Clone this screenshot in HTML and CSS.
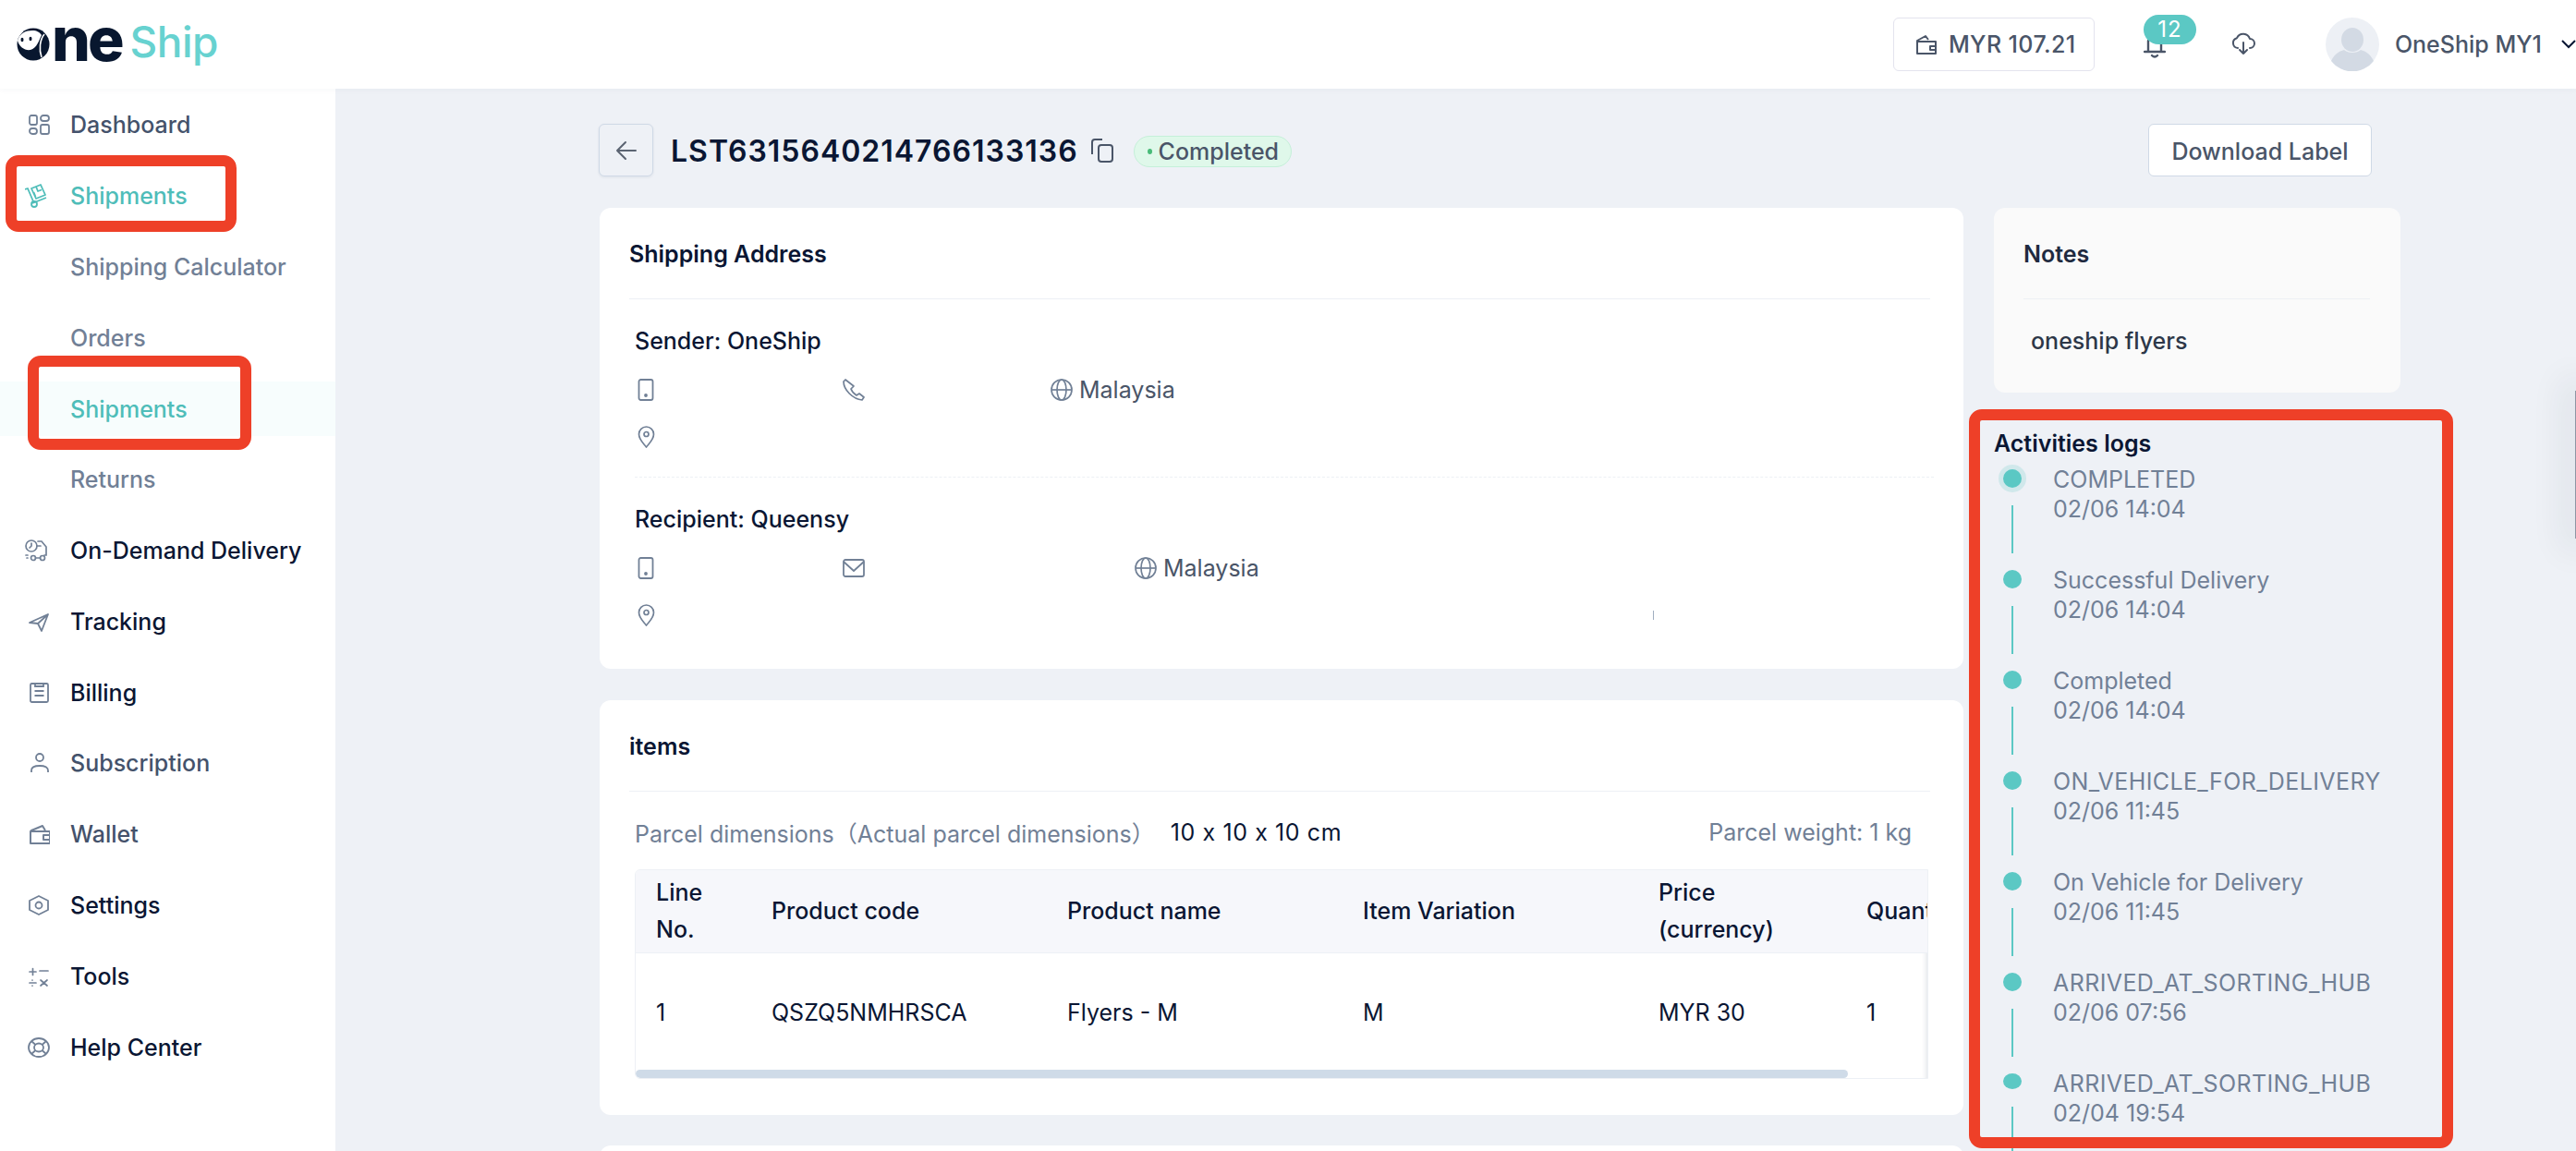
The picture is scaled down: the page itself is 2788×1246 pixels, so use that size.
FILE: index.html
```html
<!DOCTYPE html>
<html lang="en">
<head>
<meta charset="utf-8">
<title>OneShip</title>
<link rel="stylesheet" href="styles.css">
</head>
<body>
<header class="topbar">
  <div class="logo">
    <svg class="logo-mark" width="38" height="36" viewBox="0 0 38 36"><circle cx="18" cy="18" r="17.5" fill="#08172f"/><path d="M1 14C3 6 10 3 17 3c5 0 8 2 10 5-3 6-5 14-12 16C9 25 3 21 1 14z" fill="#fff"/><ellipse cx="6" cy="13" rx="1.500" ry="2.200" fill="#08172f"/><ellipse cx="15" cy="12" rx="1.500" ry="2.200" fill="#08172f"/><path d="M30 7c-5 6-6 17-3 25" fill="none" stroke="#fff" stroke-width="1.600"/></svg>
    <span class="logo-ne">ne</span><span class="logo-ship">Ship</span>
  </div>
  <div class="top-actions">
    <div class="balance">
      <svg width="24" height="24" viewBox="0 0 24 24" fill="none" stroke="#4a5568" stroke-width="2" stroke-linejoin="round"><path d="M2 9h20v13H2zM2 9l0-1 9-5 3 4M16 14h6v4h-6z"/></svg>
      <span>MYR 107.21</span>
    </div>
    <div class="bell">
      <svg width="24" height="24" viewBox="0 0 24 24" fill="none" stroke="#4a5568" stroke-width="2.400" stroke-linecap="round"><path d="M5 15V4M19 15V4M1 16h22M9 20q3 3 6 0"/></svg>
      <span class="bell-badge">12</span>
    </div>
    <svg class="cloud" width="26" height="26" viewBox="0 0 26 26" fill="none" stroke="#4a5568" stroke-width="2" stroke-linecap="round" stroke-linejoin="round"><path d="M7 18a5.500 5.500 0 0 1-1-10.800A7.500 7.500 0 0 1 20 8a5 5 0 0 1 0 10M13 12v12M9 20l4 4 4-4"/></svg>
    <svg class="avatar" width="58" height="58" viewBox="0 0 58 58"><circle cx="29" cy="29" r="29" fill="#edf0f5"/><ellipse cx="29" cy="24" rx="12" ry="13" fill="#d3dae4"/><path d="M6 47c4-9 11-11 14-12 4 4 14 4 18 0 3 1 10 3 14 12a29 29 0 0 1-46 0z" fill="#d3dae4"/></svg>
    <span class="user-name">OneShip MY1</span>
    <svg class="chevron" width="16" height="10" viewBox="0 0 16 10" fill="none" stroke="#0a1633" stroke-width="2"><path d="M1 1l7 7 7-7"/></svg>
  </div>
</header>

<div class="layout">
  <nav class="sidebar">
    <a class="nav-item tone-mid">
      <svg width="24" height="24" viewBox="0 0 24 24" fill="none" stroke="#718096" stroke-width="1.800"><rect x="2" y="2" width="8" height="10" rx="2"/><rect x="14" y="2" width="9" height="6" rx="3"/><rect x="2" y="16" width="8" height="6" rx="3"/><rect x="14" y="12" width="9" height="10" rx="2"/></svg>
      Dashboard
    </a>
    <a class="nav-item tone-active">
      <svg class="icon-shift" width="24" height="26" viewBox="0 0 24 26" fill="none" stroke="#4fbdb9" stroke-width="1.800" stroke-linejoin="round"><path d="M0 6l3-1 6 14M8 21l15-6"/><circle cx="10" cy="22" r="3"/><path d="M7 5l10-4 5 11-10 4zM12 3l2 5 4-1.500M9.500 9l2 5"/></svg>
      Shipments
    </a>
    <a class="nav-item tone-sub">Shipping Calculator</a>
    <a class="nav-item tone-sub">Orders</a>
    <a class="nav-item tone-active is-current">Shipments</a>
    <a class="nav-item tone-sub">Returns</a>
    <a class="nav-item tone-dark">
      <svg class="icon-wide" width="26" height="24" viewBox="0 0 26 24" fill="none" stroke="#718096" stroke-width="1.700" stroke-linecap="round"><circle cx="7" cy="7" r="6"/><path d="M7 4v3l-2 2M14 2h4l5 6v9h-2M13 7h4M1 17h2M2 20h1"/><circle cx="9" cy="20" r="2.500"/><circle cx="19" cy="20" r="2.500"/><path d="M11.500 20h5"/></svg>
      On-Demand Delivery
    </a>
    <a class="nav-item tone-dark">
      <svg width="24" height="24" viewBox="0 0 24 24" fill="none" stroke="#718096" stroke-width="1.800" stroke-linejoin="round"><path d="M2 13L22 4l-7 18-4-8zM11 14l11-10"/></svg>
      Tracking
    </a>
    <a class="nav-item tone-dark">
      <svg width="24" height="24" viewBox="0 0 24 24" fill="none" stroke="#718096" stroke-width="1.800"><rect x="3" y="2" width="19" height="20" rx="1.500"/><path d="M8 2v3h9V2M7.500 10h10M7.500 15h10"/></svg>
      Billing
    </a>
    <a class="nav-item tone-mid">
      <svg width="24" height="24" viewBox="0 0 24 24" fill="none" stroke="#718096" stroke-width="1.800"><circle cx="13" cy="6" r="4"/><path d="M4 22v-2c0-3 3-5 9-5s9 2 9 5v2"/></svg>
      Subscription
    </a>
    <a class="nav-item tone-mid">
      <svg width="24" height="24" viewBox="0 0 24 24" fill="none" stroke="#718096" stroke-width="2" stroke-linejoin="round"><path d="M3 9h21v13H3zM3 9l1-1 12-5 3 5M17 13h7v5h-7z"/></svg>
      Wallet
    </a>
    <a class="nav-item tone-dark">
      <svg width="24" height="24" viewBox="0 0 24 24" fill="none" stroke="#718096" stroke-width="1.800" stroke-linejoin="round"><path d="M12 2l10 5v10l-10 5-10-5V7z"/><circle cx="12" cy="12" r="3.500"/></svg>
      Settings
    </a>
    <a class="nav-item tone-dark">
      <svg width="24" height="24" viewBox="0 0 24 24" fill="none" stroke="#718096" stroke-width="1.700" stroke-linecap="round"><path d="M2 7h7M5.500 3.500v7M2 19h7M5 16v.1M5 22v.1M13 6h9M14 16l7 6M21 16l-7 6"/></svg>
      Tools
    </a>
    <a class="nav-item tone-dark">
      <svg width="24" height="24" viewBox="0 0 24 24" fill="none" stroke="#718096" stroke-width="1.800"><ellipse cx="12" cy="12" rx="11" ry="10"/><ellipse cx="12" cy="12" rx="5" ry="4.500"/><path d="M4 5l4.500 4M20 5l-4.500 4M4 19l4.500-4M20 19l-4.500-4"/></svg>
      Help Center
    </a>
  </nav>

  <main class="content">
    <div class="title-row">
      <div class="title-left">
        <button class="back-btn" type="button">
          <svg width="24" height="24" viewBox="0 0 24 24" fill="none" stroke="#5b6472" stroke-width="2" stroke-linecap="round" stroke-linejoin="round"><path d="M22 12H2M11 3l-9 9 9 9"/></svg>
        </button>
        <h1 class="shipment-id">LST6315640214766133136</h1>
        <svg class="copy-icon" width="26" height="26" viewBox="0 0 26 26" fill="none" stroke="#4a5568" stroke-width="2"><path d="M2 17V4a3 3 0 0 1 3-3h8"/><rect x="9" y="7" width="15" height="18" rx="3"/></svg>
        <span class="status-badge"><i class="status-dot"></i>Completed</span>
      </div>
      <button class="download-btn" type="button">Download Label</button>
    </div>

    <div class="columns">
      <div class="col-main">
        <section class="card card-address">
          <h2 class="card-title">Shipping Address</h2>
          <div class="party">
            <div class="party-name">Sender: OneShip</div>
            <div class="party-row">
              <span class="field field-a"><svg width="24" height="24" viewBox="0 0 24 24" fill="none" stroke="#718096" stroke-width="1.800"><rect x="4.500" y="1" width="15" height="22" rx="2"/><circle cx="12" cy="18" r="1" fill="#718096"/></svg></span>
              <span class="field field-b"><svg width="24" height="24" viewBox="0 0 24 24" fill="none" stroke="#718096" stroke-width="1.700" stroke-linejoin="round"><path d="M3 1L1 3c0 9 10 19 20 20l2-3-5-4-3 2c-3-2-5-4-6-7l3-3z"/></svg></span>
              <span class="field"><svg width="24" height="24" viewBox="0 0 24 24" fill="none" stroke="#718096" stroke-width="1.700"><circle cx="12" cy="12" r="11"/><ellipse cx="12" cy="12" rx="5" ry="11"/><path d="M1 12h22"/></svg>Malaysia</span>
            </div>
            <div class="party-row">
              <span class="field"><svg width="24" height="24" viewBox="0 0 24 24" fill="none" stroke="#718096" stroke-width="1.700" stroke-linejoin="round"><path d="M12.500 23c-3-4-8-8-8-14a8 8 0 0 1 16 0c0 6-5 10-8 14z"/><circle cx="12.500" cy="9" r="2.500"/></svg></span>
            </div>
          </div>
          <div class="party party-next">
            <div class="party-name">Recipient: Queensy</div>
            <div class="party-row">
              <span class="field field-a"><svg width="24" height="24" viewBox="0 0 24 24" fill="none" stroke="#718096" stroke-width="1.800"><rect x="4.500" y="1" width="15" height="22" rx="2"/><circle cx="12" cy="18" r="1" fill="#718096"/></svg></span>
              <span class="field field-c"><svg width="24" height="24" viewBox="0 0 24 24" fill="none" stroke="#718096" stroke-width="1.800" stroke-linejoin="round"><rect x="1" y="3" width="22" height="18" rx="2"/><path d="M1 5l11 10L23 5"/></svg></span>
              <span class="field"><svg width="24" height="24" viewBox="0 0 24 24" fill="none" stroke="#718096" stroke-width="1.700"><circle cx="12" cy="12" r="11"/><ellipse cx="12" cy="12" rx="5" ry="11"/><path d="M1 12h22"/></svg>Malaysia</span>
            </div>
            <div class="party-row">
              <span class="field"><svg width="24" height="24" viewBox="0 0 24 24" fill="none" stroke="#718096" stroke-width="1.700" stroke-linejoin="round"><path d="M12.500 23c-3-4-8-8-8-14a8 8 0 0 1 16 0c0 6-5 10-8 14z"/><circle cx="12.500" cy="9" r="2.500"/></svg></span>
              <i class="sliver"></i>
            </div>
          </div>
        </section>

        <section class="card card-items">
          <h2 class="card-title">items</h2>
          <div class="parcel-row">
            <span class="parcel-label">Parcel dimensions（Actual parcel dimensions）</span>
            <span class="parcel-value">10 x 10 x 10 cm</span>
            <span class="parcel-weight">Parcel weight: 1 kg</span>
          </div>
          <div class="table-wrap">
            <table class="items-table">
              <thead>
                <tr>
                  <th class="c-line">Line No.</th>
                  <th class="c-wide">Product code</th>
                  <th class="c-wide">Product name</th>
                  <th class="c-wide">Item Variation</th>
                  <th class="c-price">Price (currency)</th>
                  <th class="c-qty">Quantity</th>
                </tr>
              </thead>
              <tbody>
                <tr>
                  <td>1</td>
                  <td>QSZQ5NMHRSCA</td>
                  <td>Flyers - M</td>
                  <td>M</td>
                  <td>MYR 30</td>
                  <td>1</td>
                </tr>
              </tbody>
            </table>
            <div class="table-scroll"></div>
          </div>
        </section>

        <section class="card card-more"></section>
      </div>

      <aside class="col-side">
        <section class="card card-notes">
          <h2 class="card-title notes-title">Notes</h2>
          <p class="notes-text">oneship flyers</p>
        </section>
        <h2 class="logs-title">Activities logs</h2>
        <ol class="timeline">
          <li class="log log-first"><div class="log-rail"><i class="log-dot"></i><i class="log-line"></i></div><div class="log-text">COMPLETED<br>02/06 14:04</div></li>
          <li class="log"><div class="log-rail"><i class="log-dot"></i><i class="log-line"></i></div><div class="log-text">Successful Delivery<br>02/06 14:04</div></li>
          <li class="log"><div class="log-rail"><i class="log-dot"></i><i class="log-line"></i></div><div class="log-text">Completed<br>02/06 14:04</div></li>
          <li class="log"><div class="log-rail"><i class="log-dot"></i><i class="log-line"></i></div><div class="log-text"><span class="log-code">ON_VEHICLE_FOR_DELIVERY</span><br>02/06 11:45</div></li>
          <li class="log"><div class="log-rail"><i class="log-dot"></i><i class="log-line"></i></div><div class="log-text">On Vehicle for Delivery<br>02/06 11:45</div></li>
          <li class="log"><div class="log-rail"><i class="log-dot"></i><i class="log-line"></i></div><div class="log-text"><span class="log-code">ARRIVED_AT_SORTING_HUB</span><br>02/06 07:56</div></li>
          <li class="log"><div class="log-rail"><i class="log-dot"></i><i class="log-line"></i></div><div class="log-text"><span class="log-code">ARRIVED_AT_SORTING_HUB</span><br>02/04 19:54</div></li>
        </ol>
      </aside>
    </div>
  </main>
</div>

<div class="drawer-handle"></div>
<div class="mark mark-nav"></div>
<div class="mark mark-sub"></div>
<div class="mark mark-logs"></div>
</body>
</html>
```
FILE: styles.css
```css
* { box-sizing: border-box; }
html, body { margin: 0; height: 1246px; overflow: hidden; }
body {
  position: relative;
  background: #eef1f6;
  font-family: Inter, "Noto Sans CJK SC", "Liberation Sans", sans-serif;
  font-size: 25px;
  color: #0a1633;
}
h1, h2, p, ol { margin: 0; padding: 0; }
svg { flex: none; display: block; }

/* top bar */
.topbar {
  height: 96px;
  background: #fff;
  display: flex;
  align-items: center;
  justify-content: space-between;
  padding-left: 18px;
  box-shadow: 0 2px 6px rgba(30, 50, 80, .03);
  position: relative;
}
.logo { display: flex; align-items: center; height: 96px; }
.logo-ne {
  font-size: 66px;
  font-weight: 800;
  letter-spacing: -3px;
  line-height: 96px;
  margin: -13px 0 0 0;
  color: #08172f;
}
.logo-ship {
  font-size: 46px;
  font-weight: 500;
  line-height: 96px;
  margin: -6px 0 0 9px;
  letter-spacing: -.5px;
  color: #67d2d0;
}
.top-actions { display: flex; align-items: center; }
.balance {
  width: 218px;
  height: 58px;
  border: 1px solid #e3e3ee;
  border-radius: 6px;
  display: flex;
  align-items: center;
  gap: 12px;
  padding-left: 23px;
  font-weight: 500;
  color: #4a5568;
  letter-spacing: .4px;
}
.bell { position: relative; width: 24px; height: 24px; margin: 8px 0 0 53px; }
.bell-badge {
  position: absolute;
  left: 0;
  top: -24px;
  width: 57px;
  height: 32px;
  border-radius: 16px;
  background: #5bc8c4;
  color: #fff;
  font-size: 24px;
  line-height: 32px;
  letter-spacing: 1px;
  text-align: center;
}
.cloud { margin: -2px 0 0 71px; }
.avatar { margin-left: 76px; }
.user-name { margin-left: 17px; font-weight: 500; color: #4a5568; white-space: nowrap; }
.chevron { margin-left: 21px; margin-right: 0; }

/* sidebar */
.layout { display: flex; height: 1150px; overflow: hidden; }
.sidebar {
  width: 363px;
  flex: none;
  background: #fff;
  padding-top: 10px;
  display: flex;
  flex-direction: column;
  gap: 17.900px;
}
.nav-item {
  height: 58.900px;
  flex: none;
  display: flex;
  align-items: center;
  padding-left: 76px;
  font-weight: 500;
  white-space: nowrap;
}
.nav-item svg { margin-left: -46px; margin-right: 22px; }
.nav-item .icon-shift { margin-left: -49px; margin-right: 25px; }
.nav-item .icon-wide { margin-left: -49px; margin-right: 23px; }
.tone-mid { color: #44526b; }
.tone-active { color: #4fbdb9; }
.tone-sub { color: #718096; }
.tone-dark { color: #0a1633; }
.is-current { background: #f7fdfd; }

/* content */
.content { flex: 1; min-width: 0; padding: 38px 0 0 285px; }
.title-row {
  width: 1919px;
  height: 57px;
  margin-bottom: 34px;
  display: flex;
  align-items: center;
  justify-content: space-between;
}
.title-left { display: flex; align-items: center; }
.back-btn {
  width: 59px;
  height: 57px;
  padding: 0;
  background: #eef1f6;
  border: 1px solid #cfd9e6;
  border-radius: 6px;
  box-shadow: 0 1px 3px rgba(30, 50, 80, .08);
  display: flex;
  align-items: center;
  justify-content: center;
}
.shipment-id {
  margin: 2px 0 0 19px;
  font-size: 32px;
  font-weight: 600;
  line-height: 57px;
  letter-spacing: 1px;
}
.copy-icon { margin-left: 13px; }
.status-badge {
  margin: 2px 0 0 21px;
  height: 34px;
  width: 171px;
  border: 1px solid #c5f0d9;
  border-radius: 17px;
  background: #dff8ea;
  display: flex;
  align-items: center;
  color: #4a5568;
  font-weight: 500;
}
.status-dot {
  width: 5px;
  height: 6px;
  border-radius: 50%;
  background: #48bb78;
  margin: 0 7px 0 14px;
}
.download-btn {
  width: 242px;
  height: 57px;
  padding: 2px 0 0;
  background: #fff;
  border: 1px solid #cfd9e6;
  border-radius: 6px;
  font: 500 25px Inter, sans-serif;
  color: #4a5568;
}

.columns { display: flex; gap: 33px; align-items: flex-start; margin-left: 1px; }
.col-main { width: 1476px; flex: none; }
.col-side { width: 440px; flex: none; }
.card { background: #fff; border-radius: 12px; }
.card-title {
  height: 99px;
  margin: 0 36px 0 32px;
  border-bottom: 1px solid #edf0f5;
  font-size: 25px;
  font-weight: 600;
  line-height: 100px;
}
.card-address { height: 499px; margin-bottom: 34px; }
.party { margin: 0 32px 0 38px; padding-top: 25px; height: 192px; }
.party-next { border-top: 1px dashed #edf0f5; }
.party-name { height: 40px; line-height: 40px; font-weight: 500; }
.party-row { height: 40px; margin-top: 13px; display: flex; align-items: center; color: #4a5568; }
.party-row + .party-row { margin-top: 11px; }
.field { display: flex; align-items: center; gap: 7px; }
.field-a, .field-b { width: 225px; }
.field-c { width: 316px; }
.sliver { width: 1px; height: 10px; background: #a0aec0; margin-left: 1078px; }

.card-items { height: 449px; margin-bottom: 33px; }
.parcel-row {
  height: 40px;
  margin: 24px 56px 20px 38px;
  display: flex;
  align-items: center;
  color: #718096;
  white-space: nowrap;
}
.parcel-value {
  margin-left: 17px;
  color: #0a1633;
  font-feature-settings: "calt" 0;
  letter-spacing: .6px;
}
.parcel-weight { margin-left: auto; }
.table-wrap {
  width: 1400px;
  height: 227px;
  margin-left: 38px;
  overflow: hidden;
  position: relative;
  border: 1px solid #edf0f5;
  border-radius: 6px 0 0 6px;
  box-shadow: inset -6px 0 6px -6px rgba(30, 50, 80, .2);
}
.items-table { width: 1560px; table-layout: fixed; border-collapse: collapse; }
.items-table th, .items-table td { padding: 0 22px; text-align: left; }
.items-table th {
  height: 89px;
  background: #f6f7fb;
  font-weight: 500;
  line-height: 40px;
  border-bottom: 1px solid #edf0f5;
}
.items-table td { height: 129px; }
.c-line { width: 125px; }
.c-wide { width: 320px; }
.c-price { width: 225px; }
.c-qty { width: 250px; white-space: nowrap; }
.table-scroll {
  position: absolute;
  left: 0;
  bottom: 0;
  width: 1312px;
  height: 9px;
  background: #cfdbe8;
  border-radius: 5px;
}
.card-more { height: 120px; }

/* side column */
.card-notes { height: 200px; background: #fafafa; margin-bottom: 35px; }
.notes-title { color: #1f2a40; margin-right: 33px; }
.notes-text { margin: 25px 0 0 40px; line-height: 40px; font-weight: 500; color: #2d3748; }
.logs-title { font-size: 25px; font-weight: 600; line-height: 40px; height: 40px; margin-bottom: 3px; }
.timeline { list-style: none; }
.log { height: 109px; display: flex; }
.log-rail { width: 64px; flex: none; display: flex; flex-direction: column; padding: 5px 0 0 10px; }
.log-dot { width: 20px; height: 20px; border-radius: 50%; background: #5bc8c4; }
.log-first .log-dot { box-shadow: 0 0 0 5px rgba(91, 200, 196, .2); }
.log-line { width: 2px; height: 52px; margin: 19px 0 0 9px; background: #5bc8c4; }
.log:last-child .log-line { height: 80px; }
.log-text { font-size: 25px; line-height: 32px; color: #718096; white-space: nowrap; }
.log-code { letter-spacing: .4px; }

/* floating edge handle */
.drawer-handle {
  position: absolute;
  right: 0;
  top: 423px;
  width: 1px;
  height: 160px;
  background: #8f95a3;
  box-shadow: 0 0 36px 14px rgba(30, 40, 60, .07);
}

/* red annotations drawn over the page */
.mark { position: absolute; border: 12px solid #ee4028; border-radius: 14px; }
.mark-nav { left: 6px; top: 168px; width: 250px; height: 83px; }
.mark-sub { left: 30px; top: 385px; width: 242px; height: 102px; }
.mark-logs { left: 2131px; top: 443px; width: 524px; height: 800px; }
```
